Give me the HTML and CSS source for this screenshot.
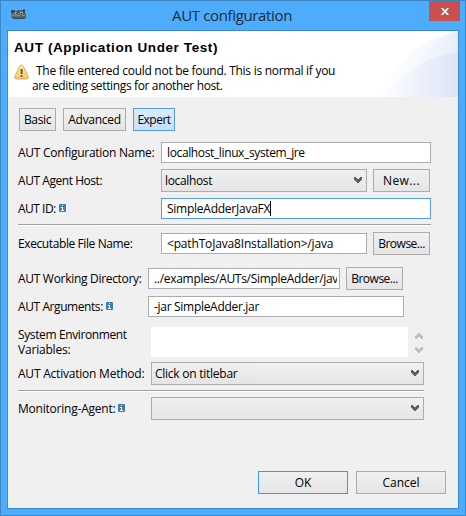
FILE: index.html
```
<!DOCTYPE html>
<html lang="en">
<head>
<meta charset="utf-8">
<title>AUT configuration</title>
<link rel="stylesheet" href="styles.css">
</head>
<body>
<svg class="defs" width="0" height="0" aria-hidden="true">
  <symbol id="chevron" viewBox="0 0 8 7"><path d="M0 0h2v1h1v1h2V1h1V0h2v3H7v1H6v1H5v1H3V5H2V4H1V3H0z" fill="currentColor"/></symbol>
  <symbol id="info" viewBox="0 0 7 8"><rect width="7" height="8" rx="1" fill="#477bb4"/><path d="M3 1h1v1H3zM2 3h2v3h1v1H2V6h1V4H2z" fill="#fff"/></symbol>
</svg>
<div class="window">
  <div class="titlebar">
    <svg class="app-icon" width="15" height="11" viewBox="0 0 15 11"><path d="M0 1h4v1h2V1h6V0h2v4l1 1v4l-2 1H2L0 8V5l1-1z" fill="#596773"/><path d="M0 1h4v1L2 4H0zM5 2h4L7 4zM11 1h3v3h-2z" fill="#3e444c"/><path d="M4 3h2v3H4zM9 3h3v2H9z" fill="#a5a29c"/><path d="M5 4h1v1H5zM10 4h1v1h-1z" fill="#26313b"/><path d="M1 6h3v1H1zM6 6h3v1H6zM11 6h3v1h-3z" fill="#7f909d"/><path d="M1 8l4 1h4l5-1v1l-3 1H4z" fill="#35424d"/></svg>
    <h1 class="caption">AUT configuration</h1>
    <button class="close" aria-label="Close"><svg width="8" height="7" viewBox="0 0 8 7"><path d="M.8 0L7.2 7M7.2 0L.8 7" stroke="#fff" stroke-width="1.8"/></svg></button>
  </div>
  <div class="client">
    <header class="banner">
      <svg class="arcs" width="80" height="66" viewBox="0 0 80 66">
        <defs>
          <linearGradient id="a"><stop offset="0" stop-color="#fff"/><stop offset="1" stop-color="#eff4fd"/></linearGradient>
          <linearGradient id="b"><stop offset="0" stop-color="#fafcff"/><stop offset="1" stop-color="#e7eefb"/></linearGradient>
          <linearGradient id="c"><stop offset="0" stop-color="#fcfdff"/><stop offset="1" stop-color="#dde4f7"/></linearGradient>
        </defs>
        <path d="M0 66Q28 10 80 0V66z" fill="url(#a)"/>
        <path d="M36 45Q49 9 80 1V66H30z" fill="url(#b)"/>
        <path d="M6 66Q33 28 80 21V66z" fill="url(#c)"/>
      </svg>
      <h2 class="heading">AUT (Application Under Test)</h2>
      <div class="notice">
        <svg class="warn" width="15" height="16" viewBox="0 0 15 16"><defs><linearGradient id="w" x2="0" y2="1"><stop offset="0" stop-color="#fff0b8"/><stop offset="1" stop-color="#f6c55e"/></linearGradient></defs><path d="M7.5 1Q8.7 1 9.3 2.4L14 12.2Q14.8 15 12.5 15H2.5Q.2 15 1 12.2L5.7 2.4Q6.3 1 7.5 1z" fill="url(#w)" stroke="#d8a760"/><path d="M6.7 5h1.8v5H6.7zM6.7 11.3h1.8v1.8H6.7z" fill="#65502e"/></svg>
        <p class="message"><span class="line first">The file entered could not be found. This is normal if you</span><span class="line second">are editing settings for another host.</span></p>
      </div>
    </header>
    <main class="form">
      <div class="tabs"><button class="btn basic">Basic</button><button class="btn advanced">Advanced</button><button class="btn expert">Expert</button></div>
      <div class="row name"><label class="wide"><span class="t-name">AUT Configuration Name:</span></label><div class="field full"><span class="v-name">localhost_linux_system_jre</span></div></div>
      <div class="row host"><label class="wide"><span class="t-host">AUT Agent Host:</span></label><div class="combo half"><span class="v-host">localhost</span><svg class="chevron"><use href="#chevron"/></svg></div><button class="btn side new">New...</button></div>
      <div class="row id"><label class="wide"><span class="t-id">AUT ID:</span><svg class="info"><use href="#info"/></svg></label><div class="field full focused"><span class="v-id">SimpleAdderJavaFX</span><i class="caret"></i></div></div>
      <div class="rule long"></div>
      <div class="row exec"><label class="wide"><span class="t-exec">Executable File Name:</span></label><div class="field half"><span class="v-exec">&lt;pathToJava8Installation&gt;/java</span></div><button class="btn side">Browse...</button></div>
      <div class="row dir"><label class="mid"><span class="t-dir">AUT Working Directory:</span></label><div class="field path"><div class="clip"><span class="v-dir">../examples/AUTs/SimpleAdder/jav</span></div></div><button class="btn side">Browse...</button></div>
      <div class="row args"><label class="mid"><span class="t-args">AUT Arguments:</span><svg class="info"><use href="#info"/></svg></label><div class="field arguments"><span class="v-args">-jar SimpleAdder.jar</span></div></div>
      <div class="row env"><label class="low two"><span class="t-env">System Environment</span><span class="t-vars">Variables:</span></label><div class="area"></div><div class="scroll"><svg class="chevron up"><use href="#chevron"/></svg><svg class="chevron"><use href="#chevron"/></svg></div></div>
      <div class="row method"><label class="low"><span class="t-method">AUT Activation Method:</span></label><div class="combo choice"><span class="v-method">Click on titlebar</span><svg class="chevron"><use href="#chevron"/></svg></div></div>
      <div class="rule short"></div>
      <div class="row agent"><label class="low"><span class="t-agent">Monitoring-Agent:</span><svg class="info"><use href="#info"/></svg></label><div class="combo choice"><svg class="chevron"><use href="#chevron"/></svg></div></div>
      <footer class="actions"><button class="btn ok">OK</button><button class="btn cancel">Cancel</button></footer>
    </main>
  </div>
</div>
</body>
</html>
```
FILE: styles.css
```
* { box-sizing: border-box; }
body { margin: 0; font: 12px/15px "Open Sans", "Noto Sans", sans-serif; color: #000; }
h1, h2, p { margin: 0; font-weight: normal; }
.defs { display: block; height: 0; }
.window { width: 466px; height: 516px; background: #4dacfc; border: 1px solid #3d86c2; padding: 0 6px 6px; }
.titlebar { height: 29px; display: flex; }
.app-icon { margin: 8px 0 0 4px; flex: none; }
.caption { width: 124px; margin: 4px 0 0 146px; font-size: 15px; line-height: 20px; color: #1c2b39; white-space: nowrap; letter-spacing: -.35px; }
.close { width: 31px; height: 20px; margin: 0 -1px 0 auto; padding: 0; border: 0; background: #c75050; display: flex; align-items: center; justify-content: center; }
.client { width: 452px; height: 479px; border: 1px solid #3b8bcd; background: #f0f0f0; }
.banner { position: relative; height: 66px; background: #fff; padding: 8px 0 0 6px; }
.arcs { position: absolute; right: 0; top: 0; }
.heading { position: relative; font: bold 13.5px/17px "Liberation Sans", Arial, sans-serif; letter-spacing: .6px; white-space: nowrap; }
.notice { position: relative; display: flex; margin-top: 7px; }
.warn { flex: none; margin-top: 1px; }
.message { margin-left: 3px; }
.line { display: block; white-space: nowrap; }
.first { padding-left: 4px; letter-spacing: -.28px; }
.second { letter-spacing: -.36px; }
.form { padding: 11px 0 0 10px; }
.tabs { display: flex; gap: 7px; padding-left: 1px; letter-spacing: -.3px; }
.btn { height: 23px; padding: 0; border: 1px solid #acacac; background: linear-gradient(#f0f0f0, #e5e5e5); font: inherit; color: #000; white-space: nowrap; display: flex; align-items: center; justify-content: center; }
.basic { width: 37px; letter-spacing: -.35px; }
.advanced { width: 63px; letter-spacing: -.3px; }
.expert { width: 42px; letter-spacing: -.5px; border-color: #569de5; background: linear-gradient(#daecfc, #c4e0fc); }
.row { display: flex; align-items: center; height: 23px; white-space: nowrap; }
label { display: flex; align-items: center; flex: none; }
.wide { width: 143px; }
.mid { width: 130px; }
.low { width: 133px; }
.two { display: block; }
.two span { display: block; }
.info { width: 7px; height: 8px; margin: -1px 0 0 3px; }
.field { height: 21px; border: 1px solid #abadb3; background: #fff; padding: 0 5px; display: flex; align-items: center; }
.full { width: 270px; }
.half { width: 206px; }
.path { width: 192px; padding: 0 2px 0 5px; }
.clip { width: 100%; overflow: hidden; }
.arguments { width: 256px; }
.focused { border-color: #569de5; }
.caret { width: 1px; height: 15px; background: #000; }
.combo { height: 23px; border: 1px solid #acacac; background: linear-gradient(#f0f0f0, #e5e5e5); padding: 0 4px 0 3px; display: flex; align-items: center; }
.chevron { width: 8px; height: 7px; margin-left: auto; color: #606060; }
.side { width: 57px; margin-left: 6px; letter-spacing: -.5px; }
.new { letter-spacing: .4px; }
.t-name { letter-spacing: -.26px; }
.t-host { letter-spacing: -.45px; }
.t-id { letter-spacing: -.5px; }
.t-exec { letter-spacing: -.4px; }
.t-dir { letter-spacing: -.3px; }
.t-args { letter-spacing: -.42px; }
.t-env { letter-spacing: -.38px; }
.t-vars { letter-spacing: -.2px; }
.t-method { letter-spacing: -.22px; }
.t-agent { letter-spacing: -.22px; }
.v-name { letter-spacing: -.37px; }
.v-host { letter-spacing: -.35px; }
.v-id { letter-spacing: -.25px; }
.v-exec { letter-spacing: -.17px; }
.v-dir { letter-spacing: -.3px; }
.v-args { letter-spacing: -.3px; }
.v-method { letter-spacing: -.25px; }
.name { margin-top: 10px; }
.host { margin-top: 5px; }
.id { margin-top: 5px; }
.rule { height: 2px; border-top: 1px solid #a0a0a0; background: #fff; }
.long { width: 413px; margin-top: 4px; }
.short { width: 406px; margin-top: 5px; }
.exec { margin-top: 6px; }
.dir { margin-top: 12px; }
.args { margin-top: 5px; }
.env { margin-top: 9px; height: 30px; }
.area { width: 257px; height: 30px; background: #fff; }
.scroll { width: 16px; height: 30px; padding: 5px 1px 3px 0; display: flex; flex-direction: column; justify-content: space-between; align-items: flex-end; }
.scroll .chevron { color: #bfbfbf; }
.up { transform: rotate(180deg); }
.method { margin-top: 5px; }
.choice { width: 273px; }
.agent { margin-top: 5px; }
.actions { display: flex; gap: 8px; margin: 51px 0 0 240px; }
.actions .btn { width: 90px; }
.ok { border-color: #3399ff; }
```
